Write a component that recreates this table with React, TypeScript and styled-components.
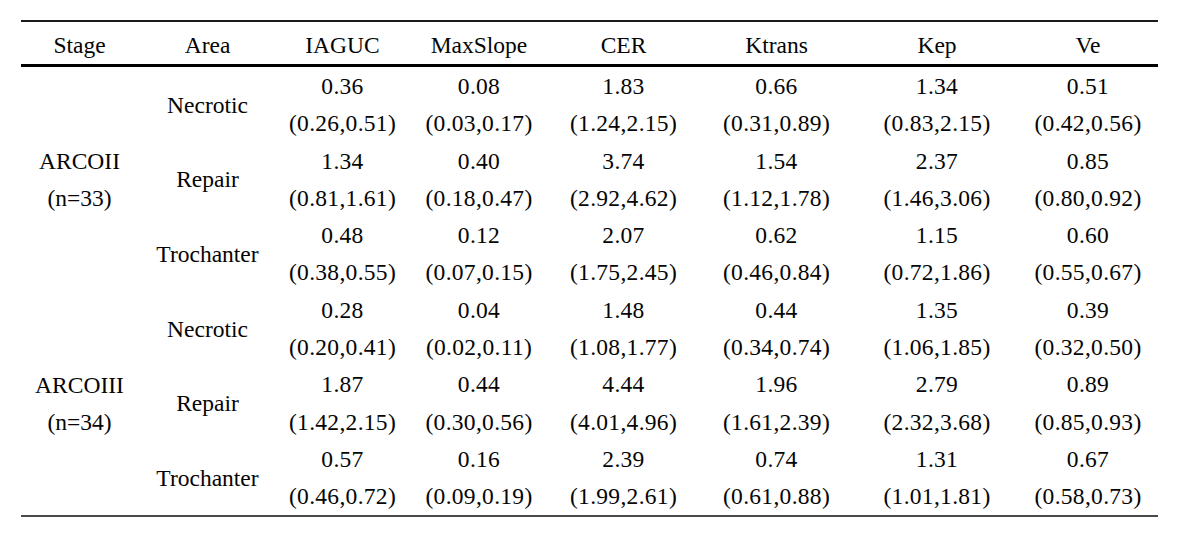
import React from "react";
import styled, { createGlobalStyle } from "styled-components";

const Global = createGlobalStyle`
  html, body { margin: 0; padding: 0; background: #fff; }
  body { font-family: "Liberation Serif", "Times New Roman", serif; color: #000; }
`;

const Page = styled.div`
  width: 1182px;
  height: 535px;
  box-sizing: border-box;
  padding: 20px 24px 0 21px;
  background: #fff;
`;

const Table = styled.div`
  width: 1137px;
  font-family: "Liberation Serif", "Times New Roman", serif;
  font-size: 23.5px;
  color: #050505;
`;

const cols = "117px 139px 131px 142px 147px 159px 162px 140px";

const HeaderRow = styled.div`
  display: grid;
  grid-template-columns: ${cols};
  height: 42px;
  align-items: center;
  border-top: 2px solid #1a1a1a;
  border-bottom: 3px solid #000;
`;

const HeadCell = styled.div`
  text-align: center;
  line-height: 42px;
  padding-top: 2px;
`;

const Body = styled.div`
  display: grid;
  grid-template-columns: ${cols};
  grid-auto-rows: 37.3px;
  border-bottom: 2px solid #4a4a4a;
`;

const StageCell = styled.div`
  grid-column: 1;
  grid-row: span 6;
  display: flex;
  flex-direction: column;
  justify-content: center;
  align-items: center;
  line-height: 37.3px;
  padding-top: 3px;
`;

const AreaCell = styled.div`
  grid-column: 2;
  grid-row: span 2;
  display: flex;
  align-items: center;
  justify-content: center;
  padding-top: 2px;
`;

const ValueCell = styled.div`
  grid-row: span 2;
  display: flex;
  flex-direction: column;
  align-items: center;
  line-height: 37.3px;
  letter-spacing: 0.3px;
  padding-top: 1px;
`;

type Val = [string, string];
type Area = { name: string; vals: Val[] };
type Stage = { name: string; n: string; areas: Area[] };

const data: Stage[] = [
  {
    name: "ARCOII",
    n: "(n=33)",
    areas: [
      {
        name: "Necrotic",
        vals: [
          ["0.36", "(0.26,0.51)"],
          ["0.08", "(0.03,0.17)"],
          ["1.83", "(1.24,2.15)"],
          ["0.66", "(0.31,0.89)"],
          ["1.34", "(0.83,2.15)"],
          ["0.51", "(0.42,0.56)"],
        ],
      },
      {
        name: "Repair",
        vals: [
          ["1.34", "(0.81,1.61)"],
          ["0.40", "(0.18,0.47)"],
          ["3.74", "(2.92,4.62)"],
          ["1.54", "(1.12,1.78)"],
          ["2.37", "(1.46,3.06)"],
          ["0.85", "(0.80,0.92)"],
        ],
      },
      {
        name: "Trochanter",
        vals: [
          ["0.48", "(0.38,0.55)"],
          ["0.12", "(0.07,0.15)"],
          ["2.07", "(1.75,2.45)"],
          ["0.62", "(0.46,0.84)"],
          ["1.15", "(0.72,1.86)"],
          ["0.60", "(0.55,0.67)"],
        ],
      },
    ],
  },
  {
    name: "ARCOIII",
    n: "(n=34)",
    areas: [
      {
        name: "Necrotic",
        vals: [
          ["0.28", "(0.20,0.41)"],
          ["0.04", "(0.02,0.11)"],
          ["1.48", "(1.08,1.77)"],
          ["0.44", "(0.34,0.74)"],
          ["1.35", "(1.06,1.85)"],
          ["0.39", "(0.32,0.50)"],
        ],
      },
      {
        name: "Repair",
        vals: [
          ["1.87", "(1.42,2.15)"],
          ["0.44", "(0.30,0.56)"],
          ["4.44", "(4.01,4.96)"],
          ["1.96", "(1.61,2.39)"],
          ["2.79", "(2.32,3.68)"],
          ["0.89", "(0.85,0.93)"],
        ],
      },
      {
        name: "Trochanter",
        vals: [
          ["0.57", "(0.46,0.72)"],
          ["0.16", "(0.09,0.19)"],
          ["2.39", "(1.99,2.61)"],
          ["0.74", "(0.61,0.88)"],
          ["1.31", "(1.01,1.81)"],
          ["0.67", "(0.58,0.73)"],
        ],
      },
    ],
  },
];

const headers = ["Stage", "Area", "IAGUC", "MaxSlope", "CER", "Ktrans", "Kep", "Ve"];

export default function App() {
  return (
    <>
      <Global />
      <Page>
        <Table>
          <HeaderRow>
            {headers.map((h) => (
              <HeadCell key={h}>{h}</HeadCell>
            ))}
          </HeaderRow>
          <Body>
            {data.map((s) => (
              <React.Fragment key={s.name}>
                <StageCell>
                  <div>{s.name}</div>
                  <div>{s.n}</div>
                </StageCell>
                {s.areas.map((a) => (
                  <React.Fragment key={a.name}>
                    <AreaCell>{a.name}</AreaCell>
                    {a.vals.map(([m, r], i) => (
                      <ValueCell key={i}>
                        <div>{m}</div>
                        <div>{r}</div>
                      </ValueCell>
                    ))}
                  </React.Fragment>
                ))}
              </React.Fragment>
            ))}
          </Body>
        </Table>
      </Page>
    </>
  );
}
